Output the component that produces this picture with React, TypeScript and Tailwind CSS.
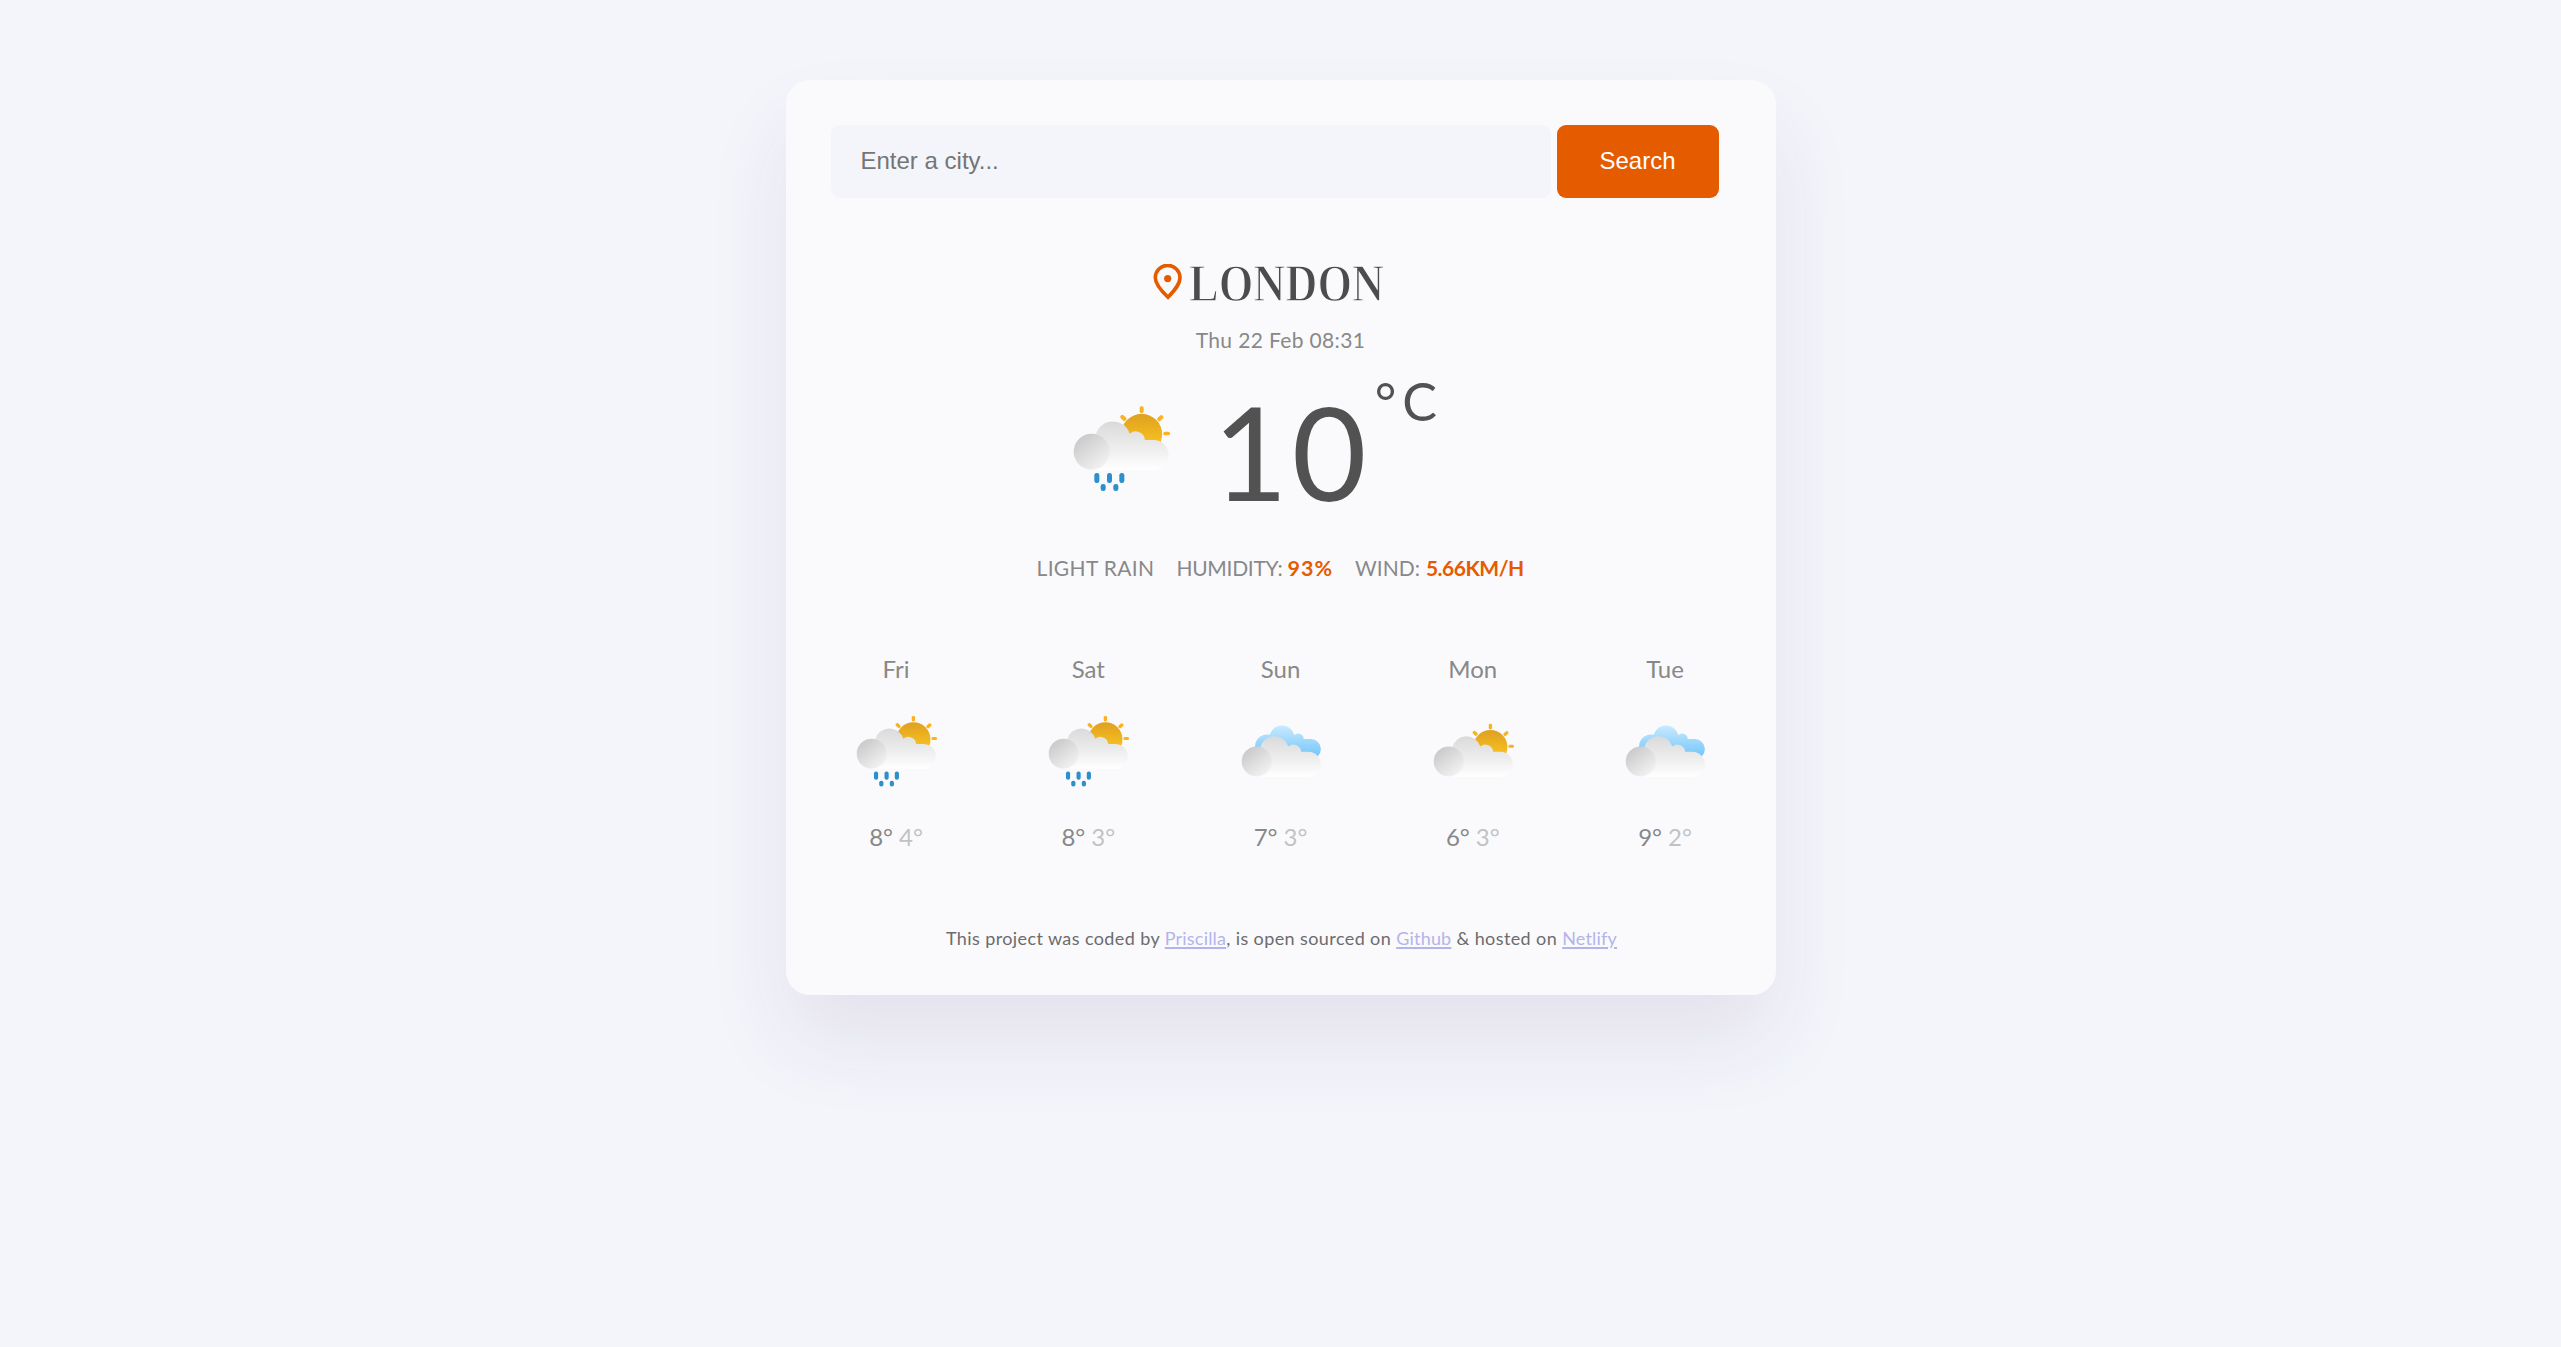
type Sky = "rain" | "sun" | "clouds";

function WeatherIcon({ kind, id, className }: { kind: Sky; id: string; className: string }) {
  const ref = (name: string) => `url(#${id}-${name})`;
  return (
    <svg viewBox="0 0 420 390" className={className} aria-hidden="true">
      <defs>
        <linearGradient id={`${id}-sun`} x1="0" y1="0" x2="0" y2="1">
          <stop offset="0" stopColor="#e0a020" />
          <stop offset="0.7" stopColor="#f6c021" />
        </linearGradient>
        <linearGradient id={`${id}-body`} gradientUnits="userSpaceOnUse" x1="0" y1="121" x2="0" y2="270">
          <stop offset="0" stopColor="#d9d9d9" />
          <stop offset="0.5" stopColor="#ebebeb" />
          <stop offset="1" stopColor="#ffffff" />
        </linearGradient>
        <linearGradient id={`${id}-puff`} x1="0.15" y1="0.1" x2="0.8" y2="0.95">
          <stop offset="0" stopColor="#c9c9c9" />
          <stop offset="1" stopColor="#f3f3f3" />
        </linearGradient>
        <linearGradient id={`${id}-blue`} gradientUnits="userSpaceOnUse" x1="0" y1="85" x2="0" y2="205">
          <stop offset="0" stopColor="#c8eaff" />
          <stop offset="1" stopColor="#6fc3f7" />
        </linearGradient>
      </defs>
      <g transform={kind === "rain" ? "translate(0 0)" : "translate(0 28)"}>
        {kind === "clouds" ? (
          <g fill={ref("blue")}>
            <circle cx="162" cy="161" r="43" />
            <circle cx="216" cy="130" r="45" />
            <circle cx="274" cy="134" r="20" />
            <circle cx="320" cy="170" r="36" />
            <path d="M216 130H286L294 134H320V200H162V140Z" />
          </g>
        ) : (
          <g>
            <circle cx="275" cy="163" r="61.5" fill={ref("sun")} />
            <g fill={kind === "rain" ? "#fdb022" : "#f3b523"}>
              <rect x="269" y="79" width="12" height="20" rx="5" />
              <rect x="269" y="79" width="12" height="20" rx="5" transform="rotate(-48 275 163)" />
              <rect x="269" y="79" width="12" height="20" rx="5" transform="rotate(49 275 163)" />
              <rect x="340" y="155" width="20" height="11" rx="5" />
            </g>
          </g>
        )}
        <path
          d="M123 270L137 165A53 53 0 0 1 239 161A28 28 0 0 1 285 180H311A45 45 0 0 1 311 270Z"
          fill={ref("body")}
        />
        <circle cx="125" cy="215" r="54" fill={ref("puff")} />
        {kind === "rain" && (
          <g fill="#2b90cb">
            <rect x="133" y="279" width="15" height="30" rx="7" />
            <rect x="171" y="279" width="15" height="30" rx="7" />
            <rect x="208" y="279" width="15" height="30" rx="7" />
            <rect x="152" y="312" width="15" height="21" rx="7" />
            <rect x="190" y="312" width="15" height="21" rx="7" />
          </g>
        )}
      </g>
    </svg>
  );
}

const forecast: { day: string; kind: Sky; high: number; low: number }[] = [
  { day: "Fri", kind: "rain", high: 8, low: 4 },
  { day: "Sat", kind: "rain", high: 8, low: 3 },
  { day: "Sun", kind: "clouds", high: 7, low: 3 },
  { day: "Mon", kind: "sun", high: 6, low: 3 },
  { day: "Tue", kind: "clouds", high: 9, low: 2 },
];

const link = "tracking-[0.2px] text-[#b3b4ea] underline decoration-[1.5px] underline-offset-2";

export default function App() {
  return (
    <div className="min-h-screen bg-[#f3f5fb] pt-20 font-['Lato',sans-serif] text-[#888888]">
      <main className="mx-auto flex h-[915px] w-[990px] flex-col rounded-[24px] bg-[#fafafd] p-[45px] shadow-[0_47px_84px_rgba(80,35,90,0.085)]">
        <form className="flex gap-[6px] font-['Liberation_Sans',sans-serif] text-[24px]">
          <input
            type="text"
            placeholder="Enter a city..."
            className="h-[73px] w-[720px] rounded-[9px] bg-[#f3f5fb] px-[30px] pb-[2px] placeholder:text-[#757575]"
          />
          <button type="button" className="h-[73px] w-[162px] rounded-[9px] bg-[#e55b00] pb-[2px] text-white">
            Search
          </button>
        </form>

        <div className="mt-[56px] flex h-[60px] pl-[322px]">
          <svg viewBox="0 0 30 36" className="mt-[10px] h-[36px] w-[30px]" fill="none" aria-hidden="true">
            <path d="M15 33.2C8.500 27 2.300 20.500 2.300 13.700A12.200 12.200 0 0 1 27 13.700C27 20.500 21 27 15 33.200Z" stroke="#e55b00" strokeWidth="3.600" />
            <circle cx="14.700" cy="14.600" r="3.600" fill="#e55b00" />
          </svg>
          <h1 className="ml-[6px] origin-left scale-x-[0.855] font-['Liberation_Serif',serif] text-[52px] leading-[60px] font-bold text-[#4c4c4c] [-webkit-text-stroke:1.4px_#fafafd]">
            LONDON
          </h1>
        </div>
        <p className="mt-[10px] text-center text-[21px] leading-8 tracking-[0.35px]">Thu 22 Feb 08:31</p>

        <div className="mt-[24px] flex h-[136px] pl-[219.500px] text-[#525252]">
          <WeatherIcon kind="rain" id="now" className="h-[130px] w-[140px]" />
          <span className="mt-[6px] ml-[23px] text-[129px] leading-[130px] tracking-[4px]">10</span>
          <span className="-mt-1 ml-[4px] text-[52px] leading-[50px] tracking-[6px]">°C</span>
        </div>

        <div className="mt-[37px] flex h-[30px] pl-[206px] text-[21px] leading-[30px] whitespace-nowrap">
          <span className="tracking-[0.35px]">LIGHT RAIN</span>
          <span className="ml-[22px] tracking-[-0.3px]">HUMIDITY:</span>
          <b className="ml-[5px] text-[21.5px] tracking-[1px] text-[#e55b00]">93%</b>
          <span className="ml-[22px]">WIND:</span>
          <b className="ml-[6px] tracking-[-0.5px] text-[#e55b00]">5.66KM/H</b>
        </div>

        <div className="mt-[68px] flex justify-between">
          {forecast.map((f) => (
            <div key={f.day} className="flex w-[131px] flex-col items-center text-[24px] leading-9">
              <span>{f.day}</span>
              <WeatherIcon kind={f.kind} id={f.day} className="mt-[6.500px] mr-[1px] h-[108.300px] w-[116.700px]" />
              <div className="mt-[17px] flex gap-[6px]">
                <span>{f.high}°</span>
                <span className="text-[#c2c2c3]">{f.low}°</span>
              </div>
            </div>
          ))}
        </div>

        <footer className="mt-[69px] pl-[2px] text-center text-[18px] leading-7 tracking-[0.4px] whitespace-nowrap text-[#6c6c6c]">
          This project was coded by <a className={link}>Priscilla</a>, is open sourced on{" "}
          <a className={link}>Github</a> & hosted on <a className={link}>Netlify</a>
        </footer>
      </main>
    </div>
  );
}
